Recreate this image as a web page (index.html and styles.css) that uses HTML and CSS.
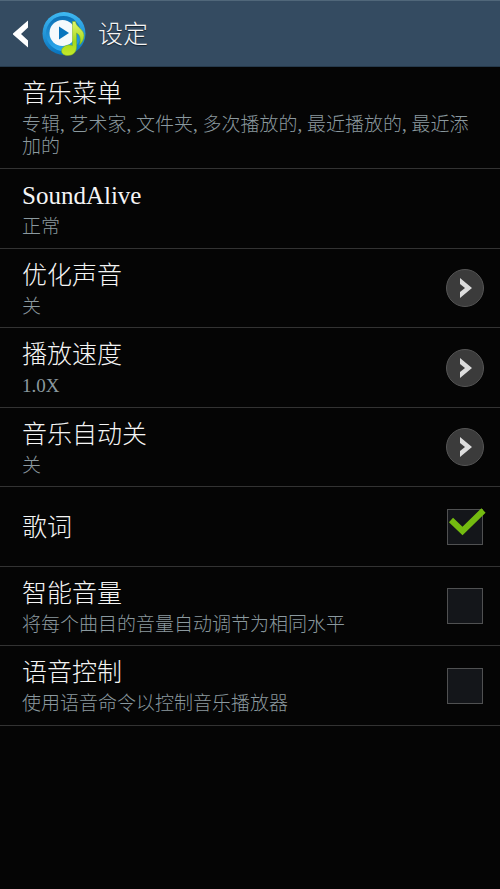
FILE: index.html
```html
<!DOCTYPE html>
<html lang="zh-CN">
<head>
<meta charset="utf-8">
<meta name="viewport" content="width=device-width, initial-scale=1">
<title>设定</title>
<link rel="stylesheet" href="styles.css">
</head>
<body>
<header class="bar">
  <button class="back" type="button" aria-label="返回">
    <svg width="16" height="28" viewBox="0 0 16 28"><path d="M15 .5v7L8 14l7 6.500v7L0 14.500v-1z" fill="#fff"/></svg>
  </button>
  <svg class="logo" width="44" height="46" viewBox="0 0 44 46" aria-hidden="true">
    <defs>
      <linearGradient id="ring" x1="0" y1="0" x2="0" y2="1"><stop offset="0" stop-color="#3fb9f3"/><stop offset="1" stop-color="#0873bd"/></linearGradient>
      <linearGradient id="inner" x1="0" y1="0" x2="0" y2="1"><stop offset="0" stop-color="#0d6fb4"/><stop offset="1" stop-color="#2baaf0"/></linearGradient>
      <linearGradient id="note" x1="0" y1="0" x2="0" y2="1"><stop offset="0" stop-color="#e3f56b"/><stop offset=".6" stop-color="#a5d91b"/><stop offset="1" stop-color="#c5ea2c"/></linearGradient>
    </defs>
    <circle cx="22" cy="22.500" r="21.500" fill="url(#ring)"/>
    <circle cx="21.500" cy="22.500" r="17.500" fill="url(#inner)"/>
    <circle cx="20.500" cy="22" r="13" fill="#f5f9fc"/>
    <path d="M17 15.500 27 22l-10 6.500z" fill="#0874bd"/>
    <path d="M30.500 10.500h3c.5 6 8.500 7.500 8.500 14 0 4-2 7-4.500 9.500 1.500-5 1-10-3-12V36c0 5-3.500 8.500-8.500 8.500-4 0-6.500-2-6.500-4.500 0-3.500 4-6 8-6 1.200 0 2.200.2 3 .6z" fill="url(#note)" stroke="#78ad16" stroke-width=".5"/>
  </svg>
  <h1 class="heading">设定</h1>
</header>
<main class="list">
  <button class="row" type="button">
    <span class="text"><span class="title">音乐菜单</span><span class="note">专辑, 艺术家, 文件夹, 多次播放的, 最近播放的, 最近添加的</span></span>
  </button>
  <button class="row" type="button">
    <span class="text"><span class="title">SoundAlive</span><span class="note">正常</span></span>
  </button>
  <button class="row" type="button">
    <span class="text"><span class="title">优化声音</span><span class="note">关</span></span>
    <span class="more"><svg width="14" height="22" viewBox="0 0 14 22"><path d="M2 1 14 11 2 21v-6l5-4-5-4z" fill="#ddd"/></svg></span>
  </button>
  <button class="row" type="button">
    <span class="text"><span class="title">播放速度</span><span class="note">1.0X</span></span>
    <span class="more"><svg width="14" height="22" viewBox="0 0 14 22"><path d="M2 1 14 11 2 21v-6l5-4-5-4z" fill="#ddd"/></svg></span>
  </button>
  <button class="row" type="button">
    <span class="text"><span class="title">音乐自动关</span><span class="note">关</span></span>
    <span class="more"><svg width="14" height="22" viewBox="0 0 14 22"><path d="M2 1 14 11 2 21v-6l5-4-5-4z" fill="#ddd"/></svg></span>
  </button>
  <label class="row">
    <span class="text"><span class="title">歌词</span></span>
    <span class="check"><input class="box" type="checkbox" checked><svg class="tick" width="38" height="38" viewBox="0 0 38 38"><path d="M5 12 16.500 23 37.500 2.500" fill="none" stroke="#74bb10" stroke-width="6"/></svg></span>
  </label>
  <label class="row">
    <span class="text"><span class="title">智能音量</span><span class="note">将每个曲目的音量自动调节为相同水平</span></span>
    <span class="check"><input class="box" type="checkbox"><svg class="tick" width="38" height="38" viewBox="0 0 38 38"><path d="M5 12 16.500 23 37.500 2.500" fill="none" stroke="#74bb10" stroke-width="6"/></svg></span>
  </label>
  <label class="row">
    <span class="text"><span class="title">语音控制</span><span class="note">使用语音命令以控制音乐播放器</span></span>
    <span class="check"><input class="box" type="checkbox"><svg class="tick" width="38" height="38" viewBox="0 0 38 38"><path d="M5 12 16.500 23 37.500 2.500" fill="none" stroke="#74bb10" stroke-width="6"/></svg></span>
  </label>
</main>
</body>
</html>
```
FILE: styles.css
```css
* {
  box-sizing: border-box;
}

body {
  margin: 0;
  min-height: 100vh;
  background: #050505;
  color: #f5f5f5;
  font-family: "Liberation Serif", "Noto Sans CJK SC", serif;
}

button {
  margin: 0;
  border: 0;
  background: none;
  color: inherit;
  font: inherit;
  text-align: left;
}

svg {
  display: block;
}

.bar {
  display: flex;
  align-items: center;
  height: 67px;
  padding: 0 13px;
  background: #344b61;
  border-top: 1px solid #50677a;
  border-bottom: 1px solid #263a4c;
}

.back {
  padding: 0;
}

.logo {
  margin-left: 13px;
}

.heading {
  margin: 0 0 0 12px;
  padding-top: 2px;
  font-size: 25px;
  line-height: 30px;
  font-weight: 300;
  text-shadow: 0 1px 1px #14202c;
}

.list {
  display: flex;
  flex-direction: column;
}

.row {
  display: flex;
  align-items: center;
  justify-content: space-between;
  width: 100%;
  min-height: 79px;
  padding: 9px 16px 9px 22px;
  border-bottom: 1px solid #333;
}

.row:nth-child(even) {
  min-height: 80px;
}

.row:first-child {
  min-height: 102px;
}

.text {
  display: flex;
  flex-direction: column;
  gap: 5px;
  padding-top: 2px;
}

.title {
  font-size: 25px;
  line-height: 30px;
  font-weight: 300;
}

.note {
  color: #8b999f;
  font-size: 19px;
  line-height: 22px;
  font-weight: 300;
}

.more {
  display: flex;
  align-items: center;
  justify-content: center;
  width: 38px;
  height: 38px;
  border: 1px solid #555;
  border-radius: 50%;
  background: #3b3b3b;
}

.check {
  position: relative;
  width: 38px;
  height: 38px;
}

.box {
  appearance: none;
  display: block;
  width: 36px;
  height: 36px;
  margin: 1px;
  border: 1px solid #505152;
  background: #14161a;
}

.tick {
  position: absolute;
  inset: 0;
  visibility: hidden;
  overflow: visible;
}

.box:checked + .tick {
  visibility: visible;
}
```
